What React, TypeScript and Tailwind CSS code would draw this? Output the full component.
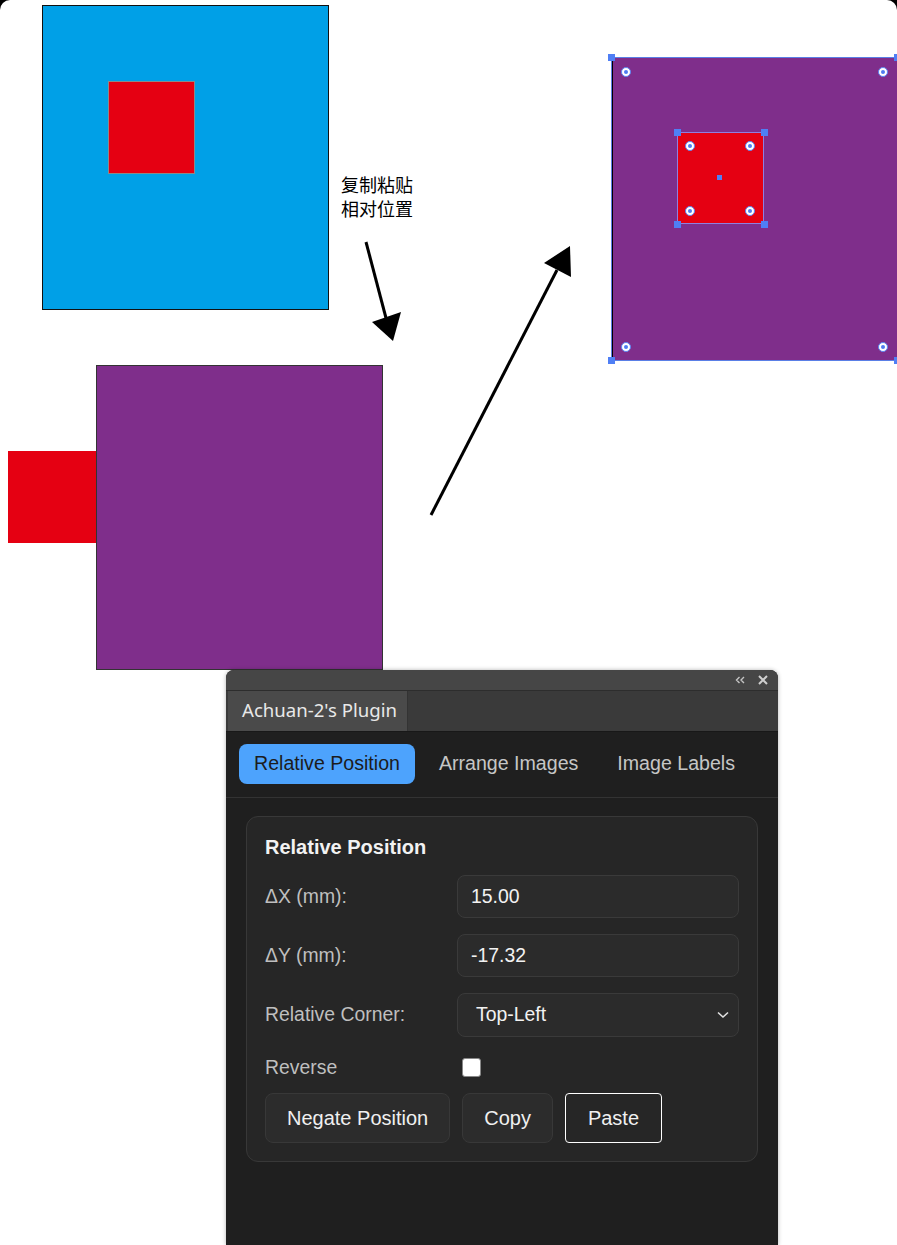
import React from "react";

const ui = { fontFamily: '"Liberation Sans", Arial, sans-serif' };

const Marker: React.FC<{ x: number; y: number }> = ({ x, y }) => (
	<div
		className="absolute flex h-[10px] w-[10px] items-center justify-center rounded-full border border-[#5b84f2] bg-white"
		style={{ left: x - 5, top: y - 5 }}
	>
		<div className="h-[4px] w-[4px] rounded-full bg-[#4f7cf0]" />
	</div>
);

const Handle: React.FC<{ x: number; y: number }> = ({ x, y }) => (
	<div className="absolute h-[7px] w-[7px] bg-[#4f7ff5]" style={{ left: x - 3, top: y - 3 }} />
);

const Canvas: React.FC = () => {
	return (
		<>
			{/* original: blue with red inside */}
			<div className="absolute left-[42px] top-[5px] h-[305px] w-[287px] border-[1.5px] border-[#111] bg-[#00a0e7]">
				<div className="absolute left-[65px] top-[75px] h-[93px] w-[87px] border border-[#8a8a8a] bg-[#e50012]" />
			</div>

			<div
				className="absolute left-[341px] top-[172px] text-[18px] leading-[24px] text-black"
				style={{ fontFamily: '"Noto Sans CJK SC", sans-serif' }}
			>
				<p>复制粘贴</p>
				<p>相对位置</p>
			</div>

			{/* before paste */}
			<div className="absolute left-[8px] top-[451px] h-[92px] w-[88px] bg-[#e50012]" />
			<div className="absolute left-[96px] top-[365px] h-[305px] w-[287px] border border-[#333] bg-[#7f2e8b]" />

			{/* after paste, selected */}
			<div className="absolute left-[611px] top-[57px] h-[304px] w-[290px] border border-[#5a7fe6] bg-[#7f2e8b]">
				<div className="absolute left-0 top-0 h-full w-[1px] bg-black" />
			</div>
			<div className="absolute left-[677px] top-[132px] h-[92px] w-[87px] border border-[#8e7fe0] bg-[#e50012]" />
			<div className="absolute left-[717px] top-[175px] h-[5px] w-[5px] bg-[#4f7ff5]" />
			<Handle x={611} y={57} />
			<Handle x={611} y={360} />
			<Handle x={897} y={57} />
			<Handle x={897} y={360} />
			<Handle x={677} y={132} />
			<Handle x={764} y={132} />
			<Handle x={677} y={224} />
			<Handle x={764} y={224} />
			<Marker x={626} y={72} />
			<Marker x={883} y={72} />
			<Marker x={626} y={347} />
			<Marker x={883} y={347} />
			<Marker x={690} y={146} />
			<Marker x={750} y={146} />
			<Marker x={690} y={211} />
			<Marker x={750} y={211} />

			<svg className="absolute left-0 top-0" width="897" height="700">
				<line x1="366" y1="242" x2="386" y2="318" stroke="black" strokeWidth="3" />
				<polygon points="372,322 401,312 393,341" fill="black" />
				<line x1="431" y1="515" x2="557" y2="270" stroke="black" strokeWidth="3" />
				<polygon points="544,263 571,277 570,246" fill="black" />
			</svg>
		</>
	);
};

const Field: React.FC<{ label: string; children: React.ReactNode }> = ({ label, children }) => (
	<div className="flex items-center">
		<span className="w-[192px] text-[19.4px] text-[#bfbfbf]">{label}</span>
		{children}
	</div>
);

const Panel: React.FC = () => {
	return (
		<div
			className="absolute left-[226px] top-[670px] flex h-[575px] w-[552px] flex-col overflow-hidden rounded-t-[8px] bg-[#1f1f1f] shadow-[0_0_4px_rgba(0,0,0,0.3)]"
			style={ui}
		>
			<div className="flex h-[20px] items-center justify-end gap-[13px] bg-[#464646] pr-[10px]">
				<svg width="10" height="8" viewBox="0 0 10 8" fill="none" stroke="#c4c4c4" strokeWidth="1.4">
					<path d="M4.5 1 L1.5 4 L4.5 7 M9 1 L6 4 L9 7" />
				</svg>
				<svg width="10" height="10" viewBox="0 0 10 10" stroke="#cfcfcf" strokeWidth="2">
					<path d="M1 1 L9 9 M9 1 L1 9" />
				</svg>
			</div>
			<div className="h-[1px] bg-[#2d2d2d]" />
			<div className="flex h-[40px] bg-[#3a3a3a]">
				<div
					className="ml-[2px] flex w-[180px] items-center border-r border-[#333] bg-[#4a4a4a] pb-[2px] pl-[14px] text-[18.6px] text-[#e8e8e8]"
					style={{ fontFamily: '"Noto Sans", sans-serif' }}
				>
					Achuan-2's Plugin
				</div>
			</div>
			<div className="h-[1px] bg-[#181818]" />

			<div className="flex gap-[9px] border-b border-[#333] px-[13px] pb-[13px] pt-[12px] text-[19.6px]">
				<button className="h-[40px] rounded-[8px] bg-[#4da3fd] px-[15px] text-[#1c1c1c]">Relative Position</button>
				<button className="h-[40px] rounded-[8px] px-[15px] text-[#c6c6c6]">Arrange Images</button>
				<button className="h-[40px] rounded-[8px] px-[15px] text-[#c6c6c6]">Image Labels</button>
			</div>

			<div className="mx-[20px] mt-[18px] flex flex-col gap-4 rounded-[12px] border border-[#383838] bg-[#262626] p-[18px]">
				<h2 className="text-[20px] font-bold leading-[24px] text-[#f2f2f2]">Relative Position</h2>
				<Field label="ΔX (mm):">
					<div className="flex h-[43px] flex-1 items-center rounded-[8px] border border-[#3a3a3a] bg-[#2b2b2b] px-[13px] text-[19.4px] text-[#f2f2f2]">
						15.00
					</div>
				</Field>
				<Field label="ΔY (mm):">
					<div className="flex h-[43px] flex-1 items-center rounded-[8px] border border-[#3a3a3a] bg-[#2b2b2b] px-[13px] text-[19.4px] text-[#f2f2f2]">
						-17.32
					</div>
				</Field>
				<Field label="Relative Corner:">
					<div className="flex h-[44px] flex-1 items-center justify-between rounded-[8px] border border-[#3a3a3a] bg-[#2b2b2b] pl-[18px] pr-[8px] text-[19.4px] text-[#f2f2f2]">
						<span>Top-Left</span>
						<svg width="14" height="8" viewBox="0 0 14 8" fill="none" stroke="#e0e0e0" strokeWidth="1.6">
							<path d="M2 1.5 L7 6 L12 1.5" />
						</svg>
					</div>
				</Field>
				<Field label="Reverse">
					<div className="ml-[5px] h-[19px] w-[19px] rounded-[3px] border border-[#888] bg-white" />
				</Field>
				<div className="-mt-[5px] flex gap-[12px] text-[20px] text-[#f0f0f0]">
					<button className="h-[50px] rounded-[8px] border border-[#383838] bg-[#2c2c2c] px-[21px]">Negate Position</button>
					<button className="h-[50px] rounded-[8px] border border-[#383838] bg-[#2c2c2c] px-[21px]">Copy</button>
					<button className="h-[50px] rounded-[4px] border-[1.5px] border-white bg-[#262626] px-[22px]">Paste</button>
				</div>
			</div>
		</div>
	);
};

export default function App() {
	return (
		<div className="h-[1245px] w-[897px] bg-black">
			<div className="relative h-full w-full overflow-hidden rounded-t-[10px] bg-white">
				<Canvas />
				<Panel />
			</div>
		</div>
	);
}
